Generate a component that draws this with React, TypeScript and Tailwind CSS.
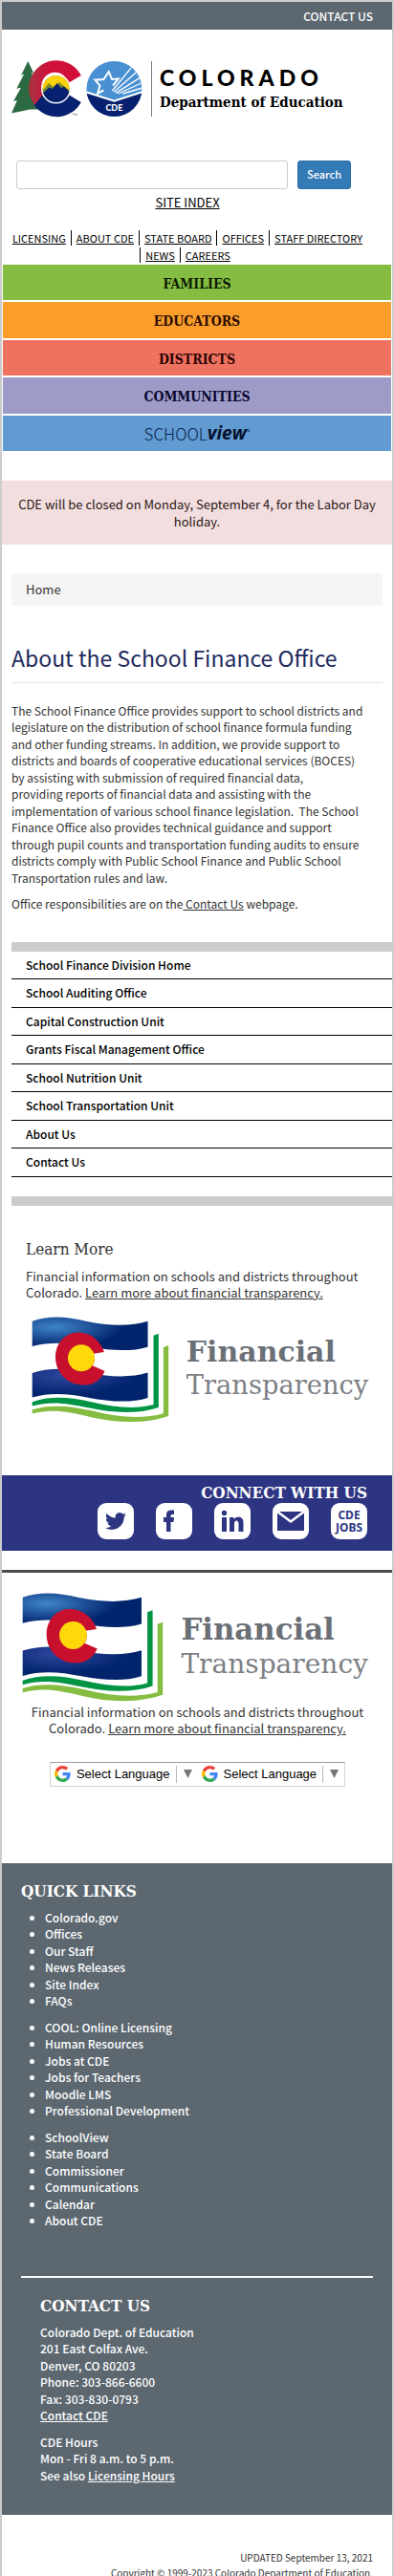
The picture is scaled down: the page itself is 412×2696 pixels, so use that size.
import type { ReactNode } from "react";

const slab = "font-['DejaVu_Serif_Condensed','DejaVu_Serif',serif]";

const topLinks = ["LICENSING", "ABOUT CDE", "STATE BOARD", "OFFICES", "STAFF DIRECTORY", "NEWS", "CAREERS"];

const sections = [
  { name: "FAMILIES", color: "bg-[#85bc41] text-[#0c1c02]" },
  { name: "EDUCATORS", color: "bg-[#fa9d2b] text-[#2c0d02]" },
  { name: "DISTRICTS", color: "bg-[#ee725f] text-[#2c0303]" },
  { name: "COMMUNITIES", color: "bg-[#9e9bc8] text-[#08082e]" },
];

const sideLinks = [
  "School Finance Division Home",
  "School Auditing Office",
  "Capital Construction Unit",
  "Grants Fiscal Management Office",
  "School Nutrition Unit",
  "School Transportation Unit",
  "About Us",
  "Contact Us",
];

const quickLinks = [
  ["Colorado.gov", "Offices", "Our Staff", "News Releases", "Site Index", "FAQs"],
  ["COOL: Online Licensing", "Human Resources", "Jobs at CDE", "Jobs for Teachers", "Moodle LMS", "Professional Development"],
  ["SchoolView", "State Board", "Commissioner", "Communications", "Calendar", "About CDE"],
];

function Emblems() {
  return (
    <svg viewBox="33 190 415 180" className="h-[60px] w-[138px] shrink-0" aria-label="Colorado and CDE emblems">
      <defs>
        <clipPath id="sun"><circle cx="176" cy="280" r="42" /></clipPath>
        <clipPath id="cde"><circle cx="359" cy="280" r="87" /></clipPath>
        <linearGradient id="cfade" x1="0" y1="0" x2="1" y2="0">
          <stop offset="0" stopColor="#a8333f" />
          <stop offset="0.4" stopColor="#d0103a" />
        </linearGradient>
      </defs>
      <path d="M88 193L106 231L98 229L120 268L112 266L130 345H95L36 357L54 316L42 319L66 276L52 279L76 233L66 238Z" fill="#2c6a42" />
      <path d="M255 238A87 87 0 0 0 92 262A87 87 0 0 0 110 333L147 303A42 42 0 1 1 214 262Z" fill="url(#cfade)" />
      <path d="M255 322A87 87 0 0 1 108 332L130 304L146 290H214V297Z" fill="#07206f" />
      <circle cx="176" cy="280" r="44" fill="#07206f" stroke="#fff" strokeWidth="5" />
      <g clipPath="url(#sun)">
        <path d="M130 230H222V282H130Z" fill="#fcd20a" />
        <path d="M130 290L153 262L168 274L186 259L224 290V302H130Z" fill="#7f8d2c" />
        <path d="M128 300L155 275L163 281L179 263L193 278L201 272L224 296V330H128Z" fill="#07206f" />
      </g>
      <path d="M228 358H234M231 358V364M236 364V358L239 362L242 358V364" stroke="#777" strokeWidth="1.5" fill="none" />
      <g clipPath="url(#cde)">
        <path d="M270 190H450V370H270Z" fill="#4890d2" />
        <g stroke="#fff" strokeWidth="4">
          <path d="M353 286L412 214M358 290L428 228M364 293L440 245M372 295L444 262M386 295L448 277" />
        </g>
        <path d="M326 284L307 295L314 270L299 252L326 250L342 226L352 250L372 248L355 270" fill="#4890d2" stroke="#fff" strokeWidth="6" strokeLinejoin="miter" />
        <path d="M270 290L359 318L448 290V370H270Z" fill="#07206f" />
        <path d="M270 290L359 318L448 290" fill="none" stroke="#fff" strokeWidth="6" />
        <text x="359" y="349" textAnchor="middle" fill="#fff" className="font-['Lato',sans-serif] text-[27px] font-black">CDE</text>
      </g>
    </svg>
  );
}

function FinancialLogo() {
  return (
    <svg viewBox="99 328 1072 338" className="block w-full" role="img" aria-label="Financial Transparency">
      <defs>
        <radialGradient id="skyblue" cx="0.2" cy="0.3" r="0.6">
          <stop offset="0" stopColor="#3f84c8" />
          <stop offset="1" stopColor="#01246d" />
        </radialGradient>
        <radialGradient id="deepblue" cx="0.3" cy="0.2" r="0.6">
          <stop offset="0" stopColor="#30479f" />
          <stop offset="1" stopColor="#01246d" />
        </radialGradient>
      </defs>
      <path d="M101 342C160 322 215 330 270 342C340 357 410 359 464 342V423C410 440 340 433 290 424C225 411 160 405 101 421Z" fill="url(#skyblue)" />
      <path d="M101 505C160 486 215 492 270 503C340 518 410 521 464 504V583C410 601 340 594 280 583C215 570 160 565 101 582Z" fill="url(#deepblue)" />
      <path d="M327 439C312 396 276 376 240 378C200 381 174 415 174 456C174 503 211 543 262 543C294 543 317 526 329 499L290 482C300 468 298 452 293 444Z" fill="#c8102e" />
      <circle cx="255" cy="458" r="42" fill="#ffd80a" />
      <path d="M101 596C160 575 225 582 290 597C360 613 425 620 482 604V387L498 381V613C430 636 350 630 280 615C210 600 160 592 101 609Z" fill="#009444" />
      <path d="M101 620C160 602 225 609 290 624C370 645 450 650 513 632V424L529 418V640C450 667 360 661 290 645C210 625 160 617 101 633Z" fill="#84bd41" />
      <text x="585" y="470" fill="#6b7077" className="font-['DejaVu_Serif',serif] text-[90px] font-bold">Financial</text>
      <text x="585" y="572" fill="#7c8085" className="font-['DejaVu_Serif',serif] text-[82px]">Transparency</text>
    </svg>
  );
}

function FinanceBlurb() {
  return (
    <p>
      Financial information on schools and districts throughout Colorado.{" "}
      <a href="#transparency" className="underline">Learn more about financial transparency.</a>
    </p>
  );
}

function GoogleMark() {
  return (
    <svg viewBox="0 0 48 48" className="size-[17px]" aria-hidden="true">
      <path fill="#ea4335" d="M24 9.500c3.540 0 6.710 1.220 9.210 3.600l6.850-6.850C35.900 2.380 30.470 0 24 0 14.620 0 6.510 5.380 2.560 13.220l7.980 6.190C12.430 13.720 17.740 9.500 24 9.500z" />
      <path fill="#4285f4" d="M46.980 24.550c0-1.570-.15-3.090-.38-4.550H24v9.020h12.940c-.58 2.960-2.260 5.480-4.780 7.180l7.730 6c4.510-4.180 7.090-10.360 7.090-17.650z" />
      <path fill="#fbbc05" d="M10.530 28.590c-.48-1.450-.76-2.990-.76-4.590s.27-3.140.76-4.590l-7.980-6.190C.92 16.460 0 20.120 0 24c0 3.880.92 7.540 2.560 10.780l7.970-6.190z" />
      <path fill="#34a853" d="M24 48c6.480 0 11.930-2.130 15.890-5.810l-7.730-6c-2.150 1.450-4.920 2.300-8.160 2.300-6.260 0-11.570-4.220-13.470-9.910l-7.980 6.190C6.510 42.620 14.620 48 24 48z" />
    </svg>
  );
}

function LanguageButton() {
  return (
    <button type="button" className="flex h-6 items-center pl-1 pr-1.5 font-['Liberation_Sans',Arial,sans-serif] text-[13px] text-black">
      <GoogleMark />
      <span className="ml-1.5 border-r border-[#bbb] pr-1.5">Select Language</span>
      <svg viewBox="0 0 9 9" className="ml-[7px] size-[9px]" aria-hidden="true"><path d="M0 0H9L4.500 9Z" fill="#767676" /></svg>
    </button>
  );
}

function SocialTile({ label, children }: { label: string; children: ReactNode }) {
  return (
    <a href="#social" aria-label={label} className="flex size-[38px] items-center justify-center overflow-hidden rounded-[9px] bg-white text-[#2d3582]">
      {children}
    </a>
  );
}

export default function App() {
  return (
    <div className="border-x-2 border-t-2 border-[#ccc] bg-white font-['Noto_Sans_CJK_JP','Source_Sans_Pro',sans-serif] text-[13px] leading-[17.5px] text-[#333]">
      <div className="flex h-[29px] items-center justify-end bg-[#5c6770] pr-5 text-[12px] font-medium text-white">
        <a href="#contact">CONTACT US</a>
      </div>

      <header>
        <a href="#home" className="flex items-center pl-[9px] pt-8 text-black">
          <Emblems />
          <span className="ml-[9px] flex h-[58px] flex-col justify-center border-l border-[#777] pl-2">
            <span className="font-['Lato',sans-serif] text-[23px] font-black leading-7 tracking-[5px]">COLORADO</span>
            <span className={`${slab} text-[15px] font-bold leading-6`}>Department of Education</span>
          </span>
        </a>
        <form className="mt-[45px] flex gap-2.5 pl-[15px] pr-[43px]" onSubmit={(e) => e.preventDefault()}>
          <input type="text" aria-label="Search" className="h-[30px] min-w-0 flex-1 rounded-[3px] border border-[#ccc] px-2" />
          <button type="submit" className="h-[30px] w-14 rounded-[3px] border border-[#2e6da4] bg-[#337ab7] text-[11px] font-medium text-white">Search</button>
        </form>
        <div className="mt-1 pr-5 text-center leading-5 text-black">
          <a href="#index" className="underline">SITE INDEX</a>
        </div>
        <ul className="mt-[19px] flex flex-wrap justify-center gap-y-0.5 pr-5 text-[11px] leading-4 text-black">
          {topLinks.map((t, i) => (
            <li key={t} className={i ? "border-l border-black px-[5px]" : "px-[5px]"}>
              <a href="#nav" className="underline">{t}</a>
            </li>
          ))}
        </ul>
        <nav className="mt-0.5 grid h-[195px] grid-rows-5 gap-0.5 px-px">
          {sections.map((s) => (
            <a key={s.name} href="#section" className={`${slab} ${s.color} flex items-center justify-center pt-1 text-[14px] font-bold`}>{s.name}</a>
          ))}
          <a href="#schoolview" className="flex items-center justify-center bg-[#629bd2] text-[17px] text-[#06234d]">
            <span className="font-light">SCHOOL</span>
            <b className="font-['Open_Sans',sans-serif] text-[19px] font-bold italic text-[#02112b]">view</b>
            <span className="pb-1 text-[8px]">®</span>
          </a>
        </nav>
      </header>

      <div className="mt-[31px] flex h-[67px] items-center justify-center bg-[#f2dede] px-3.5 text-center text-[#2c1616]">
        CDE will be closed on Monday, September 4, for the Labor Day holiday.
      </div>

      <main>
        <div className="px-2.5">
          <div className="mt-[30px] bg-[#f5f5f5] px-[15px] py-2"><a href="#home">Home</a></div>
          <h1 className="mt-10 border-b border-[#e5e5e5] pb-3 text-[23px] leading-7 text-[#1d2a5d]">About the School Finance Office</h1>
          <p className="mt-5 pr-4 text-[12px]">
            The School Finance Office provides support to school districts and legislature on the distribution of school finance formula funding and other funding streams. In addition, we provide support to districts and boards of cooperative educational services (BOCES) by assisting with submission of required financial data, providing&nbsp;reports of financial data and assisting with the implementation of various school finance legislation.&nbsp; The School Finance Office also provides technical guidance and support through pupil counts and transportation funding audits to ensure districts comply with Public School Finance and Public School Transportation rules and law.
          </p>
          <p className="mt-2.5 text-[12px]">
            Office responsibilities are on the<a href="#contact" className="underline"> Contact Us</a> webpage.
          </p>
        </div>

        <ul className="ml-2.5 mt-[31px] border-y-[10px] border-[#ccc] pb-5 text-[12px] font-medium text-black">
          {sideLinks.map((t) => (
            <li key={t} className="border-b border-black px-[15px] pb-1.5 pt-[5px]"><a href="#side">{t}</a></li>
          ))}
        </ul>

        <section className="pl-[25px] pr-5 pt-[35px]">
          <h2 className={`${slab} mb-2.5 text-[17px] leading-5`}>Learn More</h2>
          <FinanceBlurb />
          <div className="ml-1.5 mt-4"><FinancialLogo /></div>
        </section>
      </main>

      <section className="mt-[54px] h-[79px] bg-[#2d3582] pr-[26px] pt-[7px]">
        <h2 className={`${slab} text-right text-[17px] font-bold leading-[22px] text-white`}>CONNECT WITH US</h2>
        <div className="flex justify-end gap-[23px]">
          <SocialTile label="Twitter">
            <svg viewBox="0 0 24 24" className="size-[22px]" fill="currentColor"><path d="M23.950 4.570a10 10 0 0 1-2.820.77 4.960 4.960 0 0 0 2.160-2.720c-.95.55-2 .95-3.130 1.180a4.920 4.920 0 0 0-8.380 4.480C7.690 8.100 4.070 6.130 1.640 3.160a4.820 4.820 0 0 0-.66 2.480c0 1.710.87 3.210 2.190 4.100a4.900 4.900 0 0 1-2.230-.62v.06a4.920 4.920 0 0 0 3.950 4.830 5 5 0 0 1-2.210.08 4.940 4.940 0 0 0 4.600 3.420A9.870 9.870 0 0 1 0 19.540a13.990 13.990 0 0 0 7.550 2.210c9.050 0 14-7.500 14-13.980 0-.21 0-.42-.02-.63a9.940 9.940 0 0 0 2.460-2.550z" /></svg>
          </SocialTile>
          <SocialTile label="Facebook">
            <svg viewBox="0 0 38 38" className="size-full" fill="currentColor"><path d="M11 30V20H8V15H11V12Q11 7.500 16 7.500H19V12H17Q15.500 12 15.500 13.500V15H19L18.500 20H15.500V30Z" /></svg>
          </SocialTile>
          <SocialTile label="LinkedIn">
            <svg viewBox="0 0 38 38" className="size-full" fill="currentColor"><circle cx="10.500" cy="10.500" r="2.700" /><path d="M8 15H13V30H8ZM16 15H20.500V17Q22 14.500 25.500 14.500Q30.500 14.500 30.500 21V30H25.500V22Q25.500 18.500 23.200 18.500Q21 18.500 21 22V30H16Z" /></svg>
          </SocialTile>
          <SocialTile label="Email">
            <svg viewBox="0 0 38 38" className="size-full"><path d="M5 9H33V29H5Z" fill="currentColor" /><path d="M5 9L19 19.500L33 9" fill="none" stroke="#fff" strokeWidth="2.500" /></svg>
          </SocialTile>
          <SocialTile label="CDE Jobs">
            <span className="text-center font-['Noto_Sans',sans-serif] text-[12px] font-bold leading-[13px]">CDE<br />JOBS</span>
          </SocialTile>
        </div>
      </section>

      <section className="mt-5 border-t-[3px] border-[#4d4d4d] pb-20 pl-[21px] pr-5 pt-[21px] text-center">
        <FinancialLogo />
        <div className="px-2"><FinanceBlurb /></div>
        <div className="mx-auto mt-[26px] flex w-fit border border-[#d5d5d5] border-t-[#9b9b9b]">
          <LanguageButton />
          <LanguageButton />
        </div>
      </section>

      <footer>
        <div className="bg-[#5c6770] px-5 pb-[33px] pt-[18px] text-[12px] font-medium text-white">
          <h2 className={`${slab} text-[17px] font-bold leading-[22px]`}>QUICK LINKS</h2>
          <div className="mt-2 flex flex-col gap-2.5">
            {quickLinks.map((group) => (
              <ul key={group[0]} className="list-disc pl-[25px]">
                {group.map((t) => <li key={t}><a href="#quick">{t}</a></li>)}
              </ul>
            ))}
          </div>
          <hr className="mt-[49px] border-t-2 border-white" />
          <div className="px-5 pt-[18px]">
            <h2 className={`${slab} text-[17px] font-bold leading-[22px]`}>CONTACT US</h2>
            <address className="mt-2 not-italic">
              Colorado Dept. of Education<br />
              201 East Colfax Ave.<br />
              Denver, CO 80203<br />
              Phone: 303-866-6600<br />
              Fax: 303-830-0793<br />
              <a href="#contact" className="underline">Contact CDE</a>
            </address>
            <p className="mt-2.5">
              CDE Hours<br />
              Mon - Fri 8 a.m. to 5 p.m.<br />
              See also <a href="#hours" className="underline">Licensing Hours</a>
            </p>
          </div>
        </div>
        <div className="pr-5 pt-[37px] text-right text-[10px] leading-4">
          <p>UPDATED September 13, 2021</p>
          <p>Copyright © 1999-2023 Colorado Department of Education.</p>
        </div>
      </footer>
    </div>
  );
}
